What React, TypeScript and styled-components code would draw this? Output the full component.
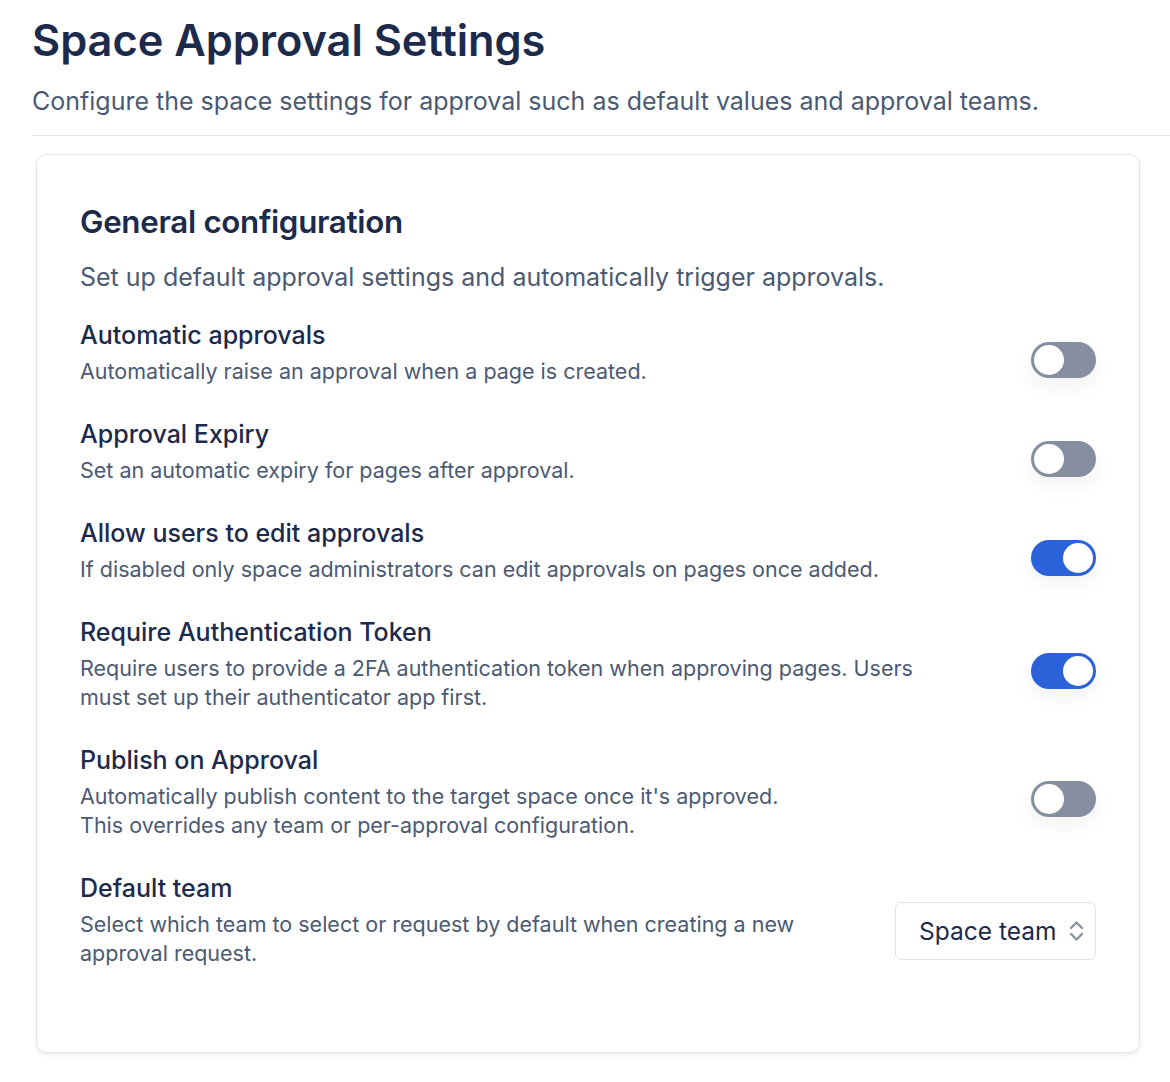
import React from "react";
import styled, { createGlobalStyle } from "styled-components";

const Global = createGlobalStyle`
  html, body { margin: 0; padding: 0; background: #ffffff; }
  body { font-family: Inter, "Noto Sans", sans-serif; -webkit-font-smoothing: antialiased; }
  * { box-sizing: border-box; }
`;

const Page = styled.div`
  padding: 14px 0 30px 32px;
`;

const Header = styled.header`
  display: flex;
  flex-direction: column;
`;

const Title = styled.h1`
  margin: 0;
  font-size: 43.3px;
  line-height: 52px;
  font-weight: 600;
  color: #1c2a4b;
`;

const Subtitle = styled.p`
  margin: 20px 0 0 0;
  font-size: 25px;
  line-height: 30px;
  color: #4b5a73;
`;

const Divider = styled.hr`
  margin: 19px 0 18px 0;
  border: 0;
  border-top: 1px solid #e3e5ea;
`;

const Card = styled.section`
  margin: 0 30px 0 4px;
  border: 1px solid #e2e4ea;
  border-radius: 10px;
  box-shadow: 0 2px 4px rgba(30, 40, 70, 0.08);
  padding: 47px 43px 70px 43px;
  background: #fff;
`;

const CardTitle = styled.h2`
  margin: 0;
  font-size: 31.3px;
  line-height: 40px;
  font-weight: 600;
  color: #1c2a4b;
  letter-spacing: -0.3px;
`;

const CardDesc = styled.p`
  margin: 19px 0 0 0;
  font-size: 25px;
  line-height: 32px;
  color: #4b5a73;
`;

const List = styled.div`
  margin-top: 26px;
  display: flex;
  flex-direction: column;
  gap: 18px;
`;

const Row = styled.div`
  display: flex;
  align-items: center;
  justify-content: space-between;
  gap: 80px;
`;

const RowText = styled.div`
  flex: 1;
  min-width: 0;
  padding-bottom: 14px;
`;

const RowTitle = styled.div`
  font-size: 25px;
  line-height: 32px;
  font-weight: 500;
  color: #1c2a4b;
`;

const RowDesc = styled.div`
  margin-top: 6px;
  font-size: 21.5px;
  line-height: 29px;
  color: #4b5a73;
`;

const Toggle = styled.button<{ $on: boolean }>`
  flex: none;
  position: relative;
  width: 65px;
  height: 36px;
  border: 0;
  padding: 0;
  border-radius: 18px;
  background: ${(p) => (p.$on ? "#2b62d9" : "#858fa0")};
  box-shadow: 0 8px 18px rgba(30, 40, 70, 0.06);
  cursor: pointer;
`;

const Knob = styled.span<{ $on: boolean }>`
  position: absolute;
  top: 3px;
  left: ${(p) => (p.$on ? "32px" : "3px")};
  width: 30px;
  height: 30px;
  border-radius: 50%;
  background: #fff;
`;

const Select = styled.div`
  flex: none;
  display: flex;
  align-items: center;
  justify-content: space-between;
  width: 201px;
  height: 58px;
  margin-top: 8px;
  padding: 0 11px 0 23px;
  border: 1px solid #dfe2e8;
  border-radius: 6px;
  font-size: 24.5px;
  color: #1c2a4b;
  background: #fff;
  white-space: nowrap;
`;

const SelectValue = styled.span`
  flex: none;
`;

const settings = [
  { title: "Automatic approvals", desc: ["Automatically raise an approval when a page is created."], on: false },
  { title: "Approval Expiry", desc: ["Set an automatic expiry for pages after approval."], on: false },
  { title: "Allow users to edit approvals", desc: ["If disabled only space administrators can edit approvals on pages once added."], on: true },
  { title: "Require Authentication Token", desc: ["Require users to provide a 2FA authentication token when approving pages. Users must set up their authenticator app first."], on: true },
  { title: "Publish on Approval", desc: ["Automatically publish content to the target space once it's approved.", "This overrides any team or per-approval configuration."], on: false },
];

const Chevrons = () => (
  <svg width="15" height="24" viewBox="0 0 15 24" fill="none" stroke="#8a93a3" strokeWidth="2.4" strokeLinecap="round" strokeLinejoin="round" style={{ flex: "none" }}>
    <path d="M2 9 L7.5 3.5 L13 9" />
    <path d="M2 15 L7.5 20.5 L13 15" />
  </svg>
);

export default function App() {
  return (
    <Page>
      <Global />
      <Header>
        <Title>Space Approval Settings</Title>
        <Subtitle>Configure the space settings for approval such as default values and approval teams.</Subtitle>
      </Header>
      <Divider />
      <Card>
        <CardTitle>General configuration</CardTitle>
        <CardDesc>Set up default approval settings and automatically trigger approvals.</CardDesc>
        <List>
          {settings.map((s) => (
            <Row key={s.title}>
              <RowText>
                <RowTitle>{s.title}</RowTitle>
                <RowDesc>
                  {s.desc.map((d, i) => (
                    <React.Fragment key={i}>
                      {i > 0 && <br />}
                      {d}
                    </React.Fragment>
                  ))}
                </RowDesc>
              </RowText>
              <Toggle $on={s.on} aria-pressed={s.on}>
                <Knob $on={s.on} />
              </Toggle>
            </Row>
          ))}
          <Row>
            <RowText>
              <RowTitle>Default team</RowTitle>
              <RowDesc>Select which team to select or request by default when creating a new approval request.</RowDesc>
            </RowText>
            <Select>
              <SelectValue>Space team</SelectValue>
              <Chevrons />
            </Select>
          </Row>
        </List>
      </Card>
    </Page>
  );
}
